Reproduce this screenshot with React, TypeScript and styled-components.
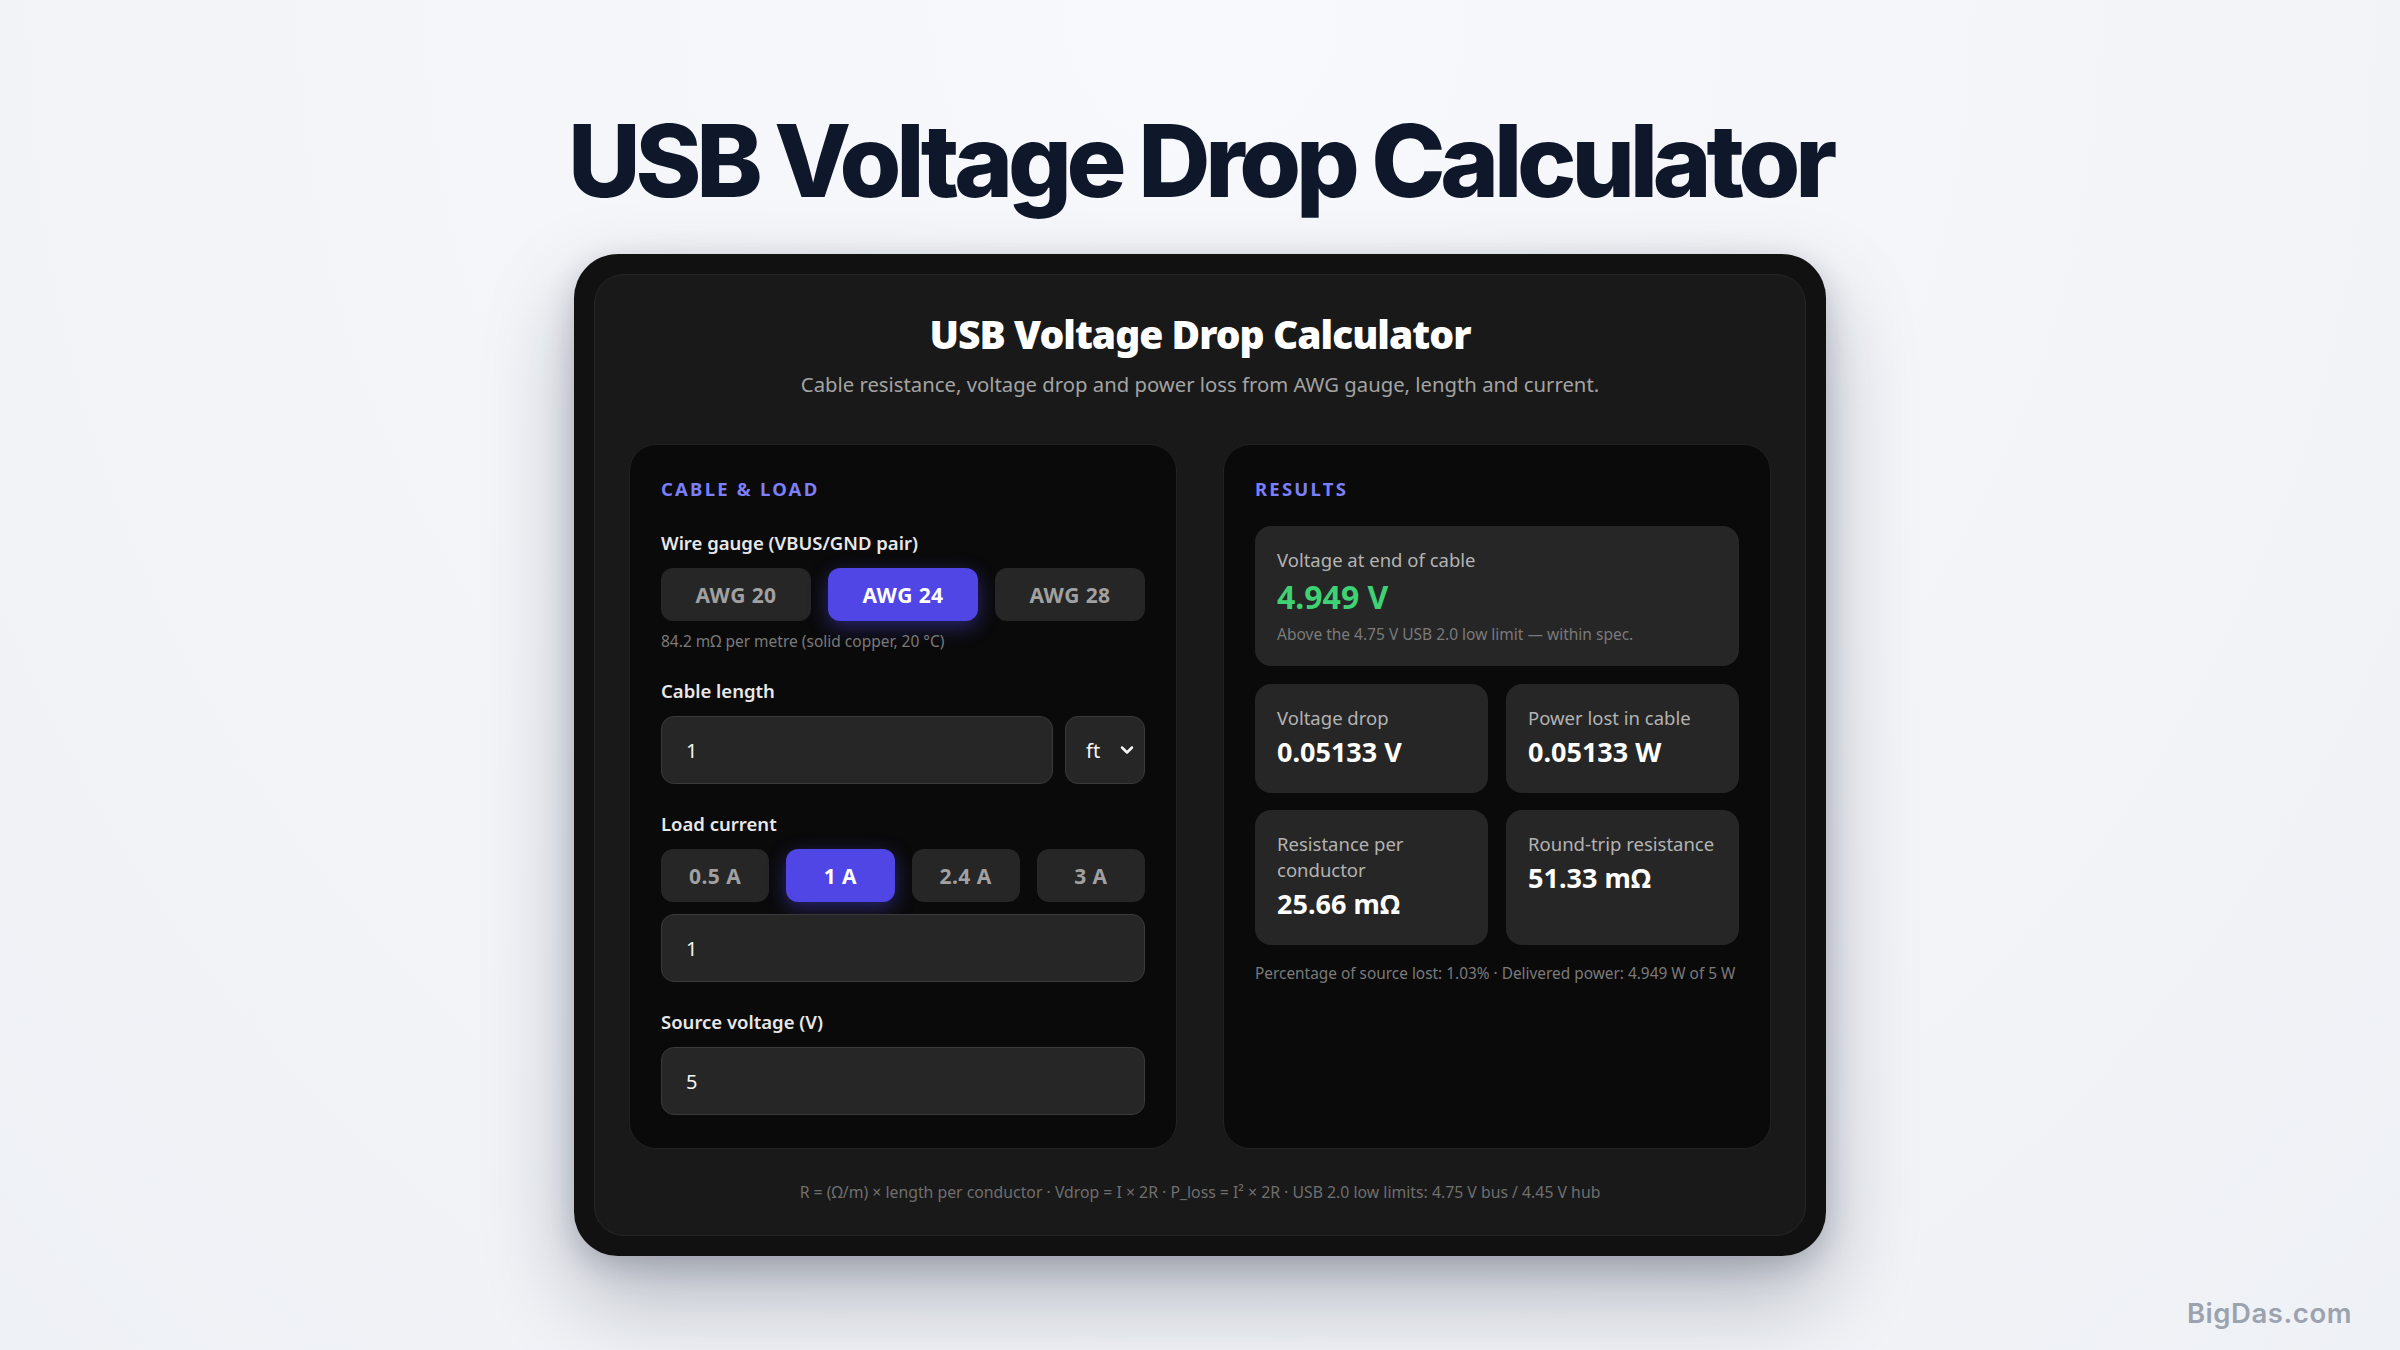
import * as React from "react";
import { createGlobalStyle, styled } from "styled-components";
import { ChevronDown } from "lucide-react";

const GlobalStyle = createGlobalStyle`
  html, body {
    margin: 0;
    padding: 0;
  }
  body {
    background: #f3f5f9;
    font-family: "Noto Sans", "Open Sans", sans-serif;
  }
  * {
    box-sizing: border-box;
  }
`;

const gauges = ["AWG 20", "AWG 24", "AWG 28"];
const currents = ["0.5 A", "1 A", "2.4 A", "3 A"];

export default function App() {
  const [gauge, setGauge] = React.useState("AWG 24");
  const [current, setCurrent] = React.useState("1 A");

  return (
    <Page>
      <GlobalStyle />
      <PageTitle>USB Voltage Drop Calculator</PageTitle>

      <Shell>
        <Card>
          <CardTitle>USB Voltage Drop Calculator</CardTitle>
          <Subtitle>
            Cable resistance, voltage drop and power loss from AWG gauge, length and current.
          </Subtitle>

          <Columns>
            <Panel>
              <Eyebrow $gap={28}>Cable &amp; Load</Eyebrow>

              <Field>
                <Label>Wire gauge (VBUS/GND pair)</Label>
                <Segments $cols={3}>
                  {gauges.map((g) => (
                    <Segment key={g} $active={g === gauge} onClick={() => setGauge(g)}>
                      {g}
                    </Segment>
                  ))}
                </Segments>
                <Hint>84.2 mΩ per metre (solid copper, 20 °C)</Hint>
              </Field>

              <Field>
                <Label>Cable length</Label>
                <InputRow>
                  <TextInput defaultValue="1" />
                  <SelectWrap>
                    <Select defaultValue="ft">
                      <option value="ft">ft</option>
                      <option value="m">m</option>
                    </Select>
                    <SelectIcon>
                      <ChevronDown size={20} strokeWidth={3} />
                    </SelectIcon>
                  </SelectWrap>
                </InputRow>
              </Field>

              <Field>
                <Label>Load current</Label>
                <Segments $cols={4}>
                  {currents.map((c) => (
                    <Segment key={c} $active={c === current} onClick={() => setCurrent(c)}>
                      {c}
                    </Segment>
                  ))}
                </Segments>
                <TextInput defaultValue="1" />
              </Field>

              <Field>
                <Label>Source voltage (V)</Label>
                <TextInput defaultValue="5" />
              </Field>
            </Panel>

            <Panel>
              <Eyebrow $gap={24}>Results</Eyebrow>

              <MainResult>
                <ResultLabel>Voltage at end of cable</ResultLabel>
                <MainValue>4.949 V</MainValue>
                <ResultNote>Above the 4.75 V USB 2.0 low limit — within spec.</ResultNote>
              </MainResult>

              <ResultGrid>
                <ResultCell>
                  <ResultLabel>Voltage drop</ResultLabel>
                  <ResultValue>0.05133 V</ResultValue>
                </ResultCell>
                <ResultCell>
                  <ResultLabel>Power lost in cable</ResultLabel>
                  <ResultValue>0.05133 W</ResultValue>
                </ResultCell>
                <ResultCell>
                  <ResultLabel>Resistance per conductor</ResultLabel>
                  <ResultValue>25.66 mΩ</ResultValue>
                </ResultCell>
                <ResultCell>
                  <ResultLabel>Round-trip resistance</ResultLabel>
                  <ResultValue>51.33 mΩ</ResultValue>
                </ResultCell>
              </ResultGrid>

              <Summary>
                Percentage of source lost: 1.03% · Delivered power: 4.949 W of 5 W
              </Summary>
            </Panel>
          </Columns>

          <Formula>
            R = (Ω/m) × length per conductor · Vdrop = I × 2R · P_loss = I² × 2R · USB 2.0 low
            limits: 4.75 V bus / 4.45 V hub
          </Formula>
        </Card>
      </Shell>

      <Watermark>BigDas.com</Watermark>
    </Page>
  );
}

const Page = styled.main`
  position: relative;
  min-height: 100vh;
  display: flex;
  flex-direction: column;
  align-items: center;
  padding-top: 106px;
  background: radial-gradient(ellipse at 50% 0%, #f7f9fc 0%, #f2f4f8 60%, #eef1f5 100%);
`;

const PageTitle = styled.h1`
  margin: 0 0 38px;
  font-family: Inter, "Liberation Sans", sans-serif;
  font-weight: 800;
  font-size: 100px;
  line-height: 110px;
  letter-spacing: -0.052em;
  color: #0f172a;
`;

const Shell = styled.section`
  width: 1252px;
  padding: 20px;
  border-radius: 44px;
  background: #111112;
  box-shadow: 0 40px 90px rgba(15, 23, 42, 0.28), 0 10px 30px rgba(15, 23, 42, 0.18);
`;

const Card = styled.div`
  display: flex;
  flex-direction: column;
  align-items: center;
  padding: 34px 34px 32px;
  border-radius: 30px;
  border: 1px solid #262626;
  background: #191919;
`;

const CardTitle = styled.h2`
  margin: 0;
  font-size: 39px;
  line-height: 50px;
  font-weight: 900;
  letter-spacing: -0.025em;
  color: #ffffff;
`;

const Subtitle = styled.p`
  margin: 10px 0 0;
  font-size: 20.3px;
  line-height: 31px;
  color: #a3a3a3;
`;

const Columns = styled.div`
  width: 100%;
  margin-top: 44px;
  display: grid;
  grid-template-columns: 1fr 1fr;
  gap: 46px;
`;

const Panel = styled.div`
  display: flex;
  flex-direction: column;
  padding: 31px 31px 33px;
  border-radius: 27px;
  border: 1px solid #222222;
  background: #0a0a0a;
`;

const Eyebrow = styled.div<{ $gap: number }>`
  margin-bottom: ${({ $gap }) => $gap}px;
  font-size: 18.5px;
  line-height: 26px;
  font-weight: 700;
  letter-spacing: 0.12em;
  text-transform: uppercase;
  color: #7c7ff7;
`;

const Field = styled.div`
  display: flex;
  flex-direction: column;
  gap: 12px;

  & + & {
    margin-top: 27px;
  }
`;

const Label = styled.div`
  font-size: 18.5px;
  line-height: 26px;
  font-weight: 600;
  color: #e8e8e8;
`;

const Segments = styled.div<{ $cols: number }>`
  display: grid;
  grid-template-columns: repeat(${({ $cols }) => $cols}, 1fr);
  gap: 17px;
`;

const Segment = styled.button<{ $active: boolean }>`
  height: 53px;
  border: none;
  border-radius: 12px;
  font-family: inherit;
  font-size: 21px;
  font-weight: 700;
  letter-spacing: 0.02em;
  cursor: pointer;
  color: ${({ $active }) => ($active ? "#ffffff" : "#a1a1a1")};
  background: ${({ $active }) => ($active ? "#4f46e5" : "#262626")};
  box-shadow: ${({ $active }) =>
    $active ? "0 6px 20px rgba(79, 70, 229, 0.45)" : "none"};
`;

const Hint = styled.div`
  margin-top: -2px;
  font-size: 15.5px;
  line-height: 20px;
  color: #7a7a7a;
`;

const InputRow = styled.div`
  display: grid;
  grid-template-columns: 1fr 80px;
  gap: 12px;
`;

const TextInput = styled.input`
  width: 100%;
  height: 68px;
  padding: 0 24px;
  border: 1px solid #3a3a3a;
  border-radius: 13px;
  background: #262626;
  font-family: inherit;
  font-size: 20px;
  color: #f5f5f5;
  outline: none;
`;

const SelectWrap = styled.div`
  position: relative;
`;

const Select = styled.select`
  width: 100%;
  height: 68px;
  padding: 0 0 0 20px;
  appearance: none;
  border: 1px solid #3a3a3a;
  border-radius: 13px;
  background: #262626;
  font-family: inherit;
  font-size: 20px;
  color: #f5f5f5;
  outline: none;
`;

const SelectIcon = styled.span`
  position: absolute;
  right: 8px;
  top: 50%;
  transform: translateY(-50%);
  display: flex;
  color: #f5f5f5;
  pointer-events: none;
`;

const MainResult = styled.div`
  display: flex;
  flex-direction: column;
  padding: 21px 22px 22px;
  border-radius: 16px;
  background: #262626;
`;

const ResultLabel = styled.div`
  font-size: 18.5px;
  line-height: 26px;
  color: #b3b3b3;
`;

const MainValue = styled.div`
  margin-top: 5px;
  font-size: 32px;
  line-height: 38px;
  font-weight: 700;
  color: #3fd174;
`;

const ResultNote = styled.div`
  margin-top: 8px;
  font-size: 15.5px;
  line-height: 20px;
  color: #7a7a7a;
`;

const ResultGrid = styled.div`
  margin-top: 18px;
  display: grid;
  grid-template-columns: 1fr 1fr;
  gap: 17px 18px;
`;

const ResultCell = styled.div`
  display: flex;
  flex-direction: column;
  padding: 21px 22px 25px;
  border-radius: 16px;
  background: #262626;
`;

const ResultValue = styled.div`
  margin-top: 5px;
  font-size: 27px;
  line-height: 32px;
  font-weight: 700;
  color: #ffffff;
`;

const Summary = styled.div`
  margin-top: 19px;
  font-size: 15.4px;
  line-height: 20px;
  color: #7a7a7a;
`;

const Formula = styled.div`
  margin-top: 33px;
  font-size: 15.8px;
  line-height: 21px;
  color: #6f6f6f;
`;

const Watermark = styled.div`
  position: absolute;
  right: 48px;
  bottom: 20px;
  font-family: Inter, "Liberation Sans", sans-serif;
  font-size: 27.5px;
  font-weight: 600;
  letter-spacing: 0.02em;
  color: #9ca3af;
`;
